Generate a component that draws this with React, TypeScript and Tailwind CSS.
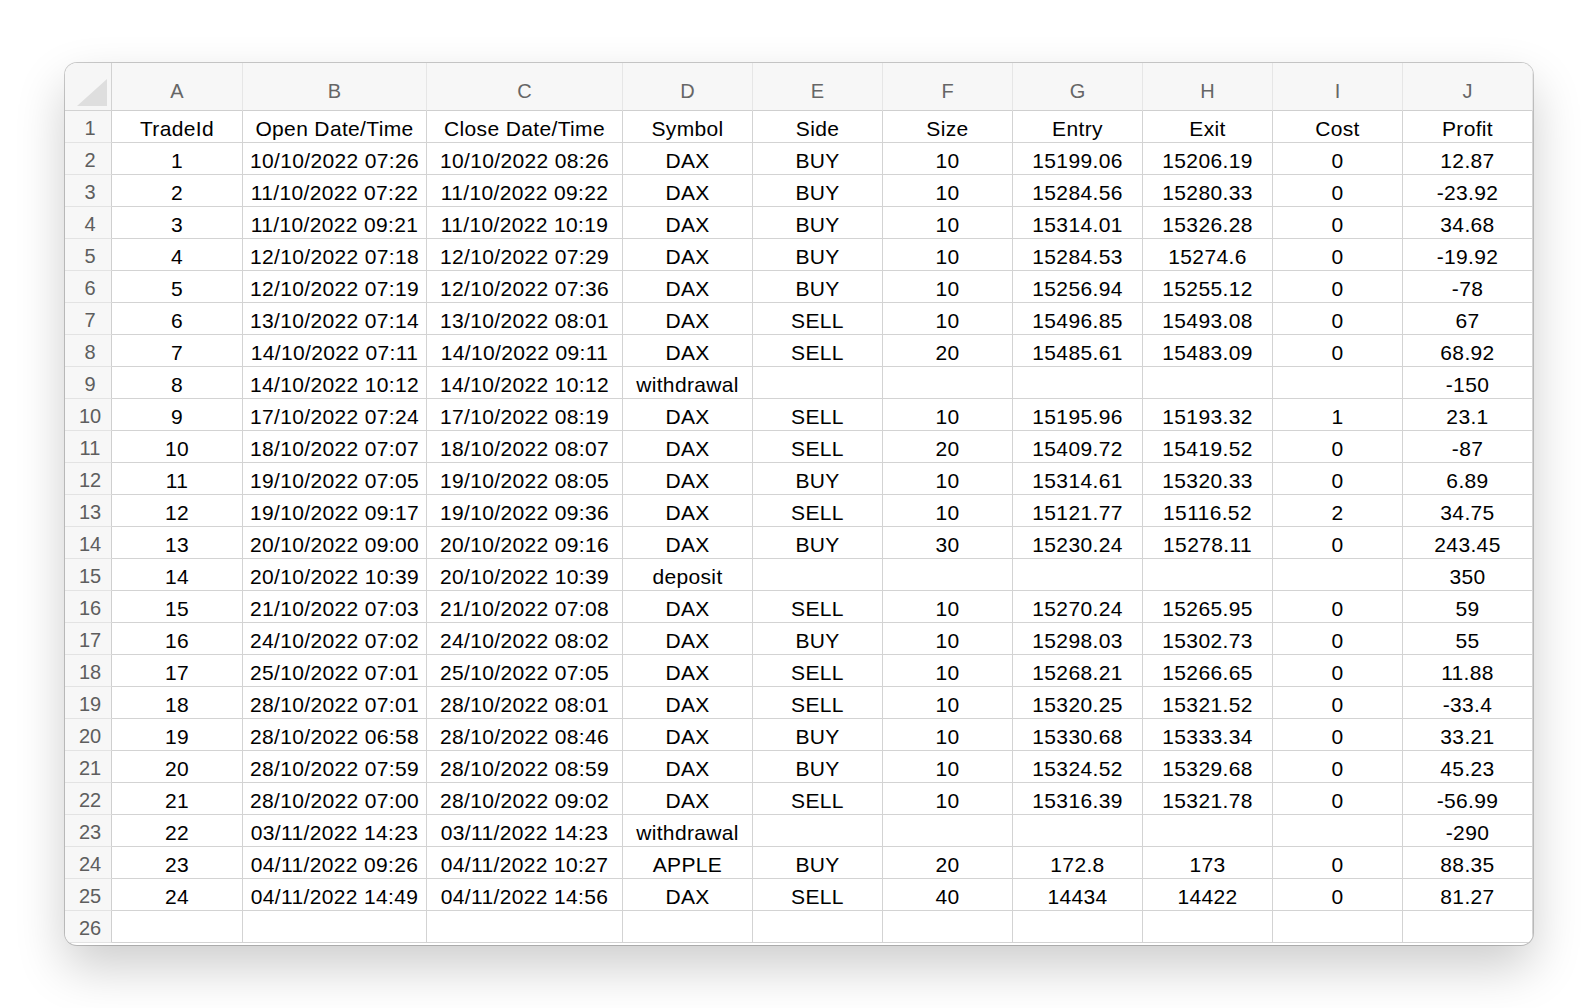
import React from "react";

const rows: string[][] = [
  ["TradeId", "Open Date/Time", "Close Date/Time", "Symbol", "Side", "Size", "Entry", "Exit", "Cost", "Profit"],
  ["1", "10/10/2022 07:26", "10/10/2022 08:26", "DAX", "BUY", "10", "15199.06", "15206.19", "0", "12.87"],
  ["2", "11/10/2022 07:22", "11/10/2022 09:22", "DAX", "BUY", "10", "15284.56", "15280.33", "0", "-23.92"],
  ["3", "11/10/2022 09:21", "11/10/2022 10:19", "DAX", "BUY", "10", "15314.01", "15326.28", "0", "34.68"],
  ["4", "12/10/2022 07:18", "12/10/2022 07:29", "DAX", "BUY", "10", "15284.53", "15274.6", "0", "-19.92"],
  ["5", "12/10/2022 07:19", "12/10/2022 07:36", "DAX", "BUY", "10", "15256.94", "15255.12", "0", "-78"],
  ["6", "13/10/2022 07:14", "13/10/2022 08:01", "DAX", "SELL", "10", "15496.85", "15493.08", "0", "67"],
  ["7", "14/10/2022 07:11", "14/10/2022 09:11", "DAX", "SELL", "20", "15485.61", "15483.09", "0", "68.92"],
  ["8", "14/10/2022 10:12", "14/10/2022 10:12", "withdrawal", "", "", "", "", "", "-150"],
  ["9", "17/10/2022 07:24", "17/10/2022 08:19", "DAX", "SELL", "10", "15195.96", "15193.32", "1", "23.1"],
  ["10", "18/10/2022 07:07", "18/10/2022 08:07", "DAX", "SELL", "20", "15409.72", "15419.52", "0", "-87"],
  ["11", "19/10/2022 07:05", "19/10/2022 08:05", "DAX", "BUY", "10", "15314.61", "15320.33", "0", "6.89"],
  ["12", "19/10/2022 09:17", "19/10/2022 09:36", "DAX", "SELL", "10", "15121.77", "15116.52", "2", "34.75"],
  ["13", "20/10/2022 09:00", "20/10/2022 09:16", "DAX", "BUY", "30", "15230.24", "15278.11", "0", "243.45"],
  ["14", "20/10/2022 10:39", "20/10/2022 10:39", "deposit", "", "", "", "", "", "350"],
  ["15", "21/10/2022 07:03", "21/10/2022 07:08", "DAX", "SELL", "10", "15270.24", "15265.95", "0", "59"],
  ["16", "24/10/2022 07:02", "24/10/2022 08:02", "DAX", "BUY", "10", "15298.03", "15302.73", "0", "55"],
  ["17", "25/10/2022 07:01", "25/10/2022 07:05", "DAX", "SELL", "10", "15268.21", "15266.65", "0", "11.88"],
  ["18", "28/10/2022 07:01", "28/10/2022 08:01", "DAX", "SELL", "10", "15320.25", "15321.52", "0", "-33.4"],
  ["19", "28/10/2022 06:58", "28/10/2022 08:46", "DAX", "BUY", "10", "15330.68", "15333.34", "0", "33.21"],
  ["20", "28/10/2022 07:59", "28/10/2022 08:59", "DAX", "BUY", "10", "15324.52", "15329.68", "0", "45.23"],
  ["21", "28/10/2022 07:00", "28/10/2022 09:02", "DAX", "SELL", "10", "15316.39", "15321.78", "0", "-56.99"],
  ["22", "03/11/2022 14:23", "03/11/2022 14:23", "withdrawal", "", "", "", "", "", "-290"],
  ["23", "04/11/2022 09:26", "04/11/2022 10:27", "APPLE", "BUY", "20", "172.8", "173", "0", "88.35"],
  ["24", "04/11/2022 14:49", "04/11/2022 14:56", "DAX", "SELL", "40", "14434", "14422", "0", "81.27"],
  ["", "", "", "", "", "", "", "", "", ""],
];

const letters = ["A", "B", "C", "D", "E", "F", "G", "H", "I", "J"];

export default function App() {
  return (
    <div
      className="w-[1596px] h-[1008px] bg-white pl-[65px] pt-[63px]"
      style={{ fontFamily: '"Liberation Sans", Arial, sans-serif' }}
    >
      <div className="w-[1468px] h-[882px] rounded-[12px] overflow-hidden bg-white shadow-[0_0_0_1px_rgba(0,0,0,0.2),0_22px_50px_rgba(0,0,0,0.2)]">
        <div className="grid grid-cols-[47px_131px_184px_196px_repeat(7,130px)]">
          {/* corner */}
          <div className="h-[48px] bg-[#f6f6f6] border-r border-b border-[#d2d2d2] flex items-end justify-end pr-[4px] pb-[4px]">
            <svg width="30" height="27" viewBox="0 0 30 27">
              <polygon points="30,0 30,27 0,27" fill="#dedede" />
            </svg>
          </div>
          {letters.map((l) => (
            <div
              key={l}
              className="h-[48px] bg-[#f7f7f7] border-r border-[#e6e6e6] border-b border-b-[#cfcfcf] flex items-center justify-center pt-[8px] text-[20px] text-[#666666] leading-none"
            >
              {l}
            </div>
          ))}
          {rows.map((r, i) => (
            <React.Fragment key={i}>
              <div className="h-[32px] bg-[#f7f7f7] border-r border-r-[#cfcfcf] border-b border-b-[#e3e3e3] flex items-center justify-center pt-[3px] pl-[4px] text-[20px] text-[#5e5e5e] leading-none">
                {i + 1}
              </div>
              {r.map((c, j) => (
                <div
                  key={j}
                  className="h-[32px] border-r border-b border-[#d3d3d3] flex items-center justify-center pt-[3px] text-[21px] tracking-[0.35px] text-black leading-none whitespace-nowrap"
                >
                  {c}
                </div>
              ))}
            </React.Fragment>
          ))}
        </div>
      </div>
    </div>
  );
}
